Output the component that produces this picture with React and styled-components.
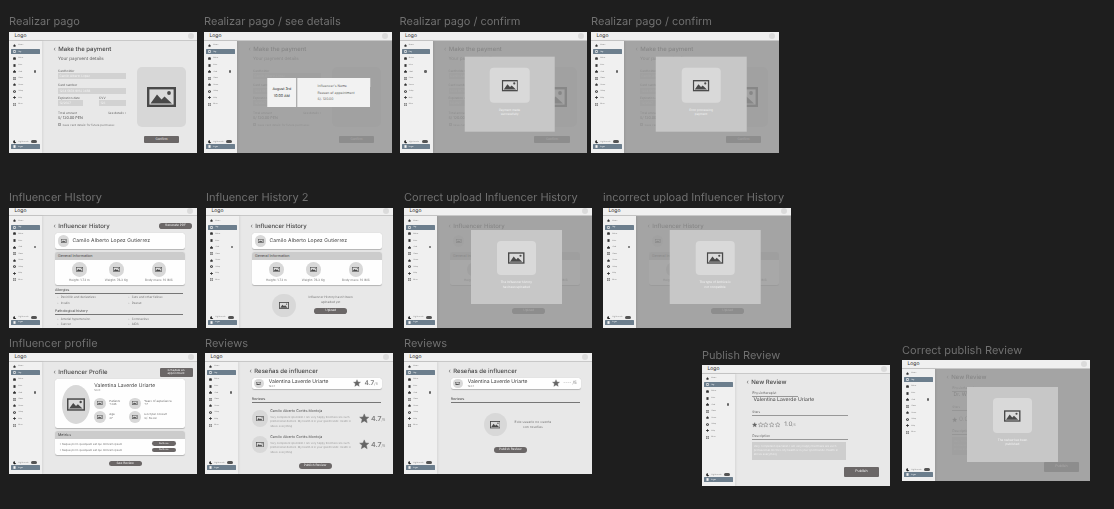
import React from "react";
import styled, { createGlobalStyle } from "styled-components";

const Global = createGlobalStyle`
  html, body { margin: 0; padding: 0; background: #1e1e1e; }
  body { font-family: "Inter", "Liberation Sans", sans-serif; overflow: hidden; text-rendering: geometricPrecision; }
  * { box-sizing: border-box; }
`;

const Canvas = styled.div`
  position: relative;
  width: 1114px;
  height: 509px;
  background: #1e1e1e;
  overflow: hidden;
`;
const Artboard = styled.section`
  position: absolute;
  left: ${(p) => p.$x}px;
  top: ${(p) => p.$y - (p.$lh || 16)}px;
  width: ${(p) => p.$w || 188}px;
  opacity: 0.999;
`;
const BoardLabel = styled.div`
  height: ${(p) => p.$lh || 16}px;
  font-size: 11px;
  line-height: 11px;
  color: #717171;
  white-space: nowrap;
`;
const Screen = styled.div`
  width: 100%;
  height: 120.5px;
  background: #e9e9e9;
  display: flex;
  flex-direction: column;
  overflow: hidden;
  color: #4a4a4a;
`;
const TopBar = styled.header`
  height: 8.5px;
  flex: none;
  background: #f1f1f1;
  border-bottom: 0.5px solid #c9c9c9;
  display: flex;
  align-items: center;
  justify-content: space-between;
  padding: 0 3.5px 0 5.5px;
  font-size: 5px;
  color: #333;
`;
const Avatar = styled.span`
  width: 6px;
  height: 6px;
  border-radius: 50%;
  background: #dcdcdc;
`;
const Body = styled.div`
  flex: 1;
  display: flex;
  min-height: 0;
`;
const Sidebar = styled.nav`
  width: 33px;
  flex: none;
  background: #f1f1f1;
  box-shadow: 1px 0 2px rgba(0, 0, 0, 0.08);
  display: flex;
  flex-direction: column;
  padding: 1.6px 2.5px 3px 2px;
  z-index: 2;
`;
const NavRow = styled.div`
  height: ${(p) => (p.$h ? p.$h : 6.55)}px;
  flex: none;
  display: flex;
  align-items: center;
  gap: 2px;
  padding: 0 2.2px;
  font-size: ${(p) => (p.$small ? 1.9 : 1.8)}px;
  white-space: nowrap;
  color: ${(p) => (p.$active ? "#fff" : "#777")};
`;
const NavInner = styled.div`
  flex: 1;
  height: 5px;
  display: flex;
  align-items: center;
  gap: 2px;
  margin: 0 -2.2px;
  padding: 0 2.2px;
  border-radius: 0.5px;
  background: ${(p) => (p.$active ? "#6d7f8e" : "transparent")};
`;
const Badge = styled.span`
  width: 2.4px;
  height: 2.4px;
  border-radius: 50%;
  background: #666;
  margin-left: auto;
  margin-right: 1px;
`;
const BottomArea = styled.div`
  margin-top: auto;
`;
const Toggle = styled.span`
  width: 6px;
  height: 3px;
  border-radius: 1.5px;
  background: #555;
  margin-left: auto;
`;
const Main = styled.main`
  flex: 1;
  min-width: 0;
  position: relative;
  overflow: hidden;
`;
const Page = styled.div`
  display: flex;
  flex-direction: column;
  padding: ${(p) => p.$top || 5}px 0 0 11.5px;
  height: 100%;
`;
const TitleRow = styled.div`
  display: flex;
  align-items: center;
  justify-content: space-between;
  height: 7px;
  flex: none;
  padding-right: 4.5px;
`;
const Title = styled.h1`
  margin: 0;
  font-size: ${(p) => p.$size || 6}px;
  font-weight: 500;
  color: #484848;
  white-space: nowrap;
  display: flex;
  align-items: center;
  gap: 2.5px;
  &::before {
    content: "‹";
    font-weight: 400;
    font-size: 6px;
    color: #666;
  }
`;
const DarkButton = styled.div`
  background: #6c6868;
  color: #f2f2f2;
  font-size: ${(p) => p.$size || 3.2}px;
  line-height: 3.4px;
  text-align: center;
  display: flex;
  align-items: center;
  justify-content: center;
  width: ${(p) => p.$w}px;
  height: ${(p) => p.$h}px;
  margin-top: ${(p) => p.$mt || 0}px;
  border-radius: ${(p) => (p.$pill ? p.$h / 2 : 1)}px;
  flex: none;
`;
const PayBody = styled.div`
  display: flex;
  gap: 11px;
  padding-left: 4.5px;
  margin-top: 4.8px;
`;
const PayForm = styled.div`
  width: 68px;
  display: flex;
  flex-direction: column;
`;
const SubTitle = styled.div`
  font-size: 4.6px;
  line-height: 6px;
  color: #666;
  margin-bottom: 5.7px;
`;
const Label = styled.div`
  font-size: 3.1px;
  line-height: 4px;
  color: #666;
  white-space: nowrap;
  margin-top: ${(p) => p.$mt || 0}px;
`;
const Input = styled.div`
  height: 6px;
  margin-top: 0.3px;
  background: #d3d3d3;
  color: #f5f5f5;
  font-size: 3px;
  line-height: 6px;
  padding-left: 1.5px;
  width: ${(p) => p.$w || "100%"};
  white-space: nowrap;
  overflow: hidden;
`;
const TwoFields = styled.div`
  display: grid;
  grid-template-columns: 25px 27px;
  justify-content: space-between;
  margin-top: 2.3px;
`;
const TotalRow = styled.div`
  display: flex;
  justify-content: space-between;
  margin-top: 5px;
  font-size: 3.1px;
  line-height: 4px;
  color: #666;
`;
const Amount = styled.div`
  font-size: 3.7px;
  line-height: 5px;
  color: #555;
  margin-top: 0.3px;
`;
const SaveRow = styled.div`
  display: flex;
  align-items: center;
  gap: 1.5px;
  font-size: 2.9px;
  line-height: 4px;
  color: #777;
  margin-top: 2.2px;
  white-space: nowrap;
`;
const CheckBox = styled.span`
  width: 3px;
  height: 3px;
  background: #d3d3d3;
  border: 0.3px solid #aaa;
  flex: none;
`;
const ImageCard = styled.div`
  width: 49px;
  height: 60px;
  margin-top: 9.7px;
  background: #d8d8d8;
  border-radius: 5px;
  flex: none;
  display: flex;
  align-items: center;
  justify-content: center;
`;
const PayFooter = styled.div`
  padding-left: 90.2px;
  margin-top: 9.3px;
`;
const Card = styled.div`
  background: #fff;
  border-radius: 2.5px;
  box-shadow: 0 0.5px 0.8px rgba(0, 0, 0, 0.22);
  overflow: hidden;
  width: ${(p) => p.$w || 130}px;
  margin-left: ${(p) => p.$ml ?? 1.5}px;
  margin-top: ${(p) => p.$mt || 0}px;
  flex: none;
  visibility: ${(p) => (p.$hidden ? "hidden" : "visible")};
`;
const PersonRow = styled.div`
  height: ${(p) => p.$h || 16.6}px;
  display: flex;
  align-items: center;
  gap: ${(p) => p.$gap || 3.3}px;
  padding: 0 ${(p) => p.$pr || 3}px 0 ${(p) => p.$pl || 3}px;
`;
const Circle = styled.div`
  width: ${(p) => p.$d}px;
  height: ${(p) => p.$d}px;
  border-radius: 50%;
  background: #d9d9d9;
  flex: none;
  display: flex;
  align-items: center;
  justify-content: center;
  visibility: ${(p) => (p.$hidden ? "hidden" : "visible")};
`;
const PersonName = styled.div`
  font-size: ${(p) => p.$size || 5}px;
  line-height: 6px;
  letter-spacing: ${(p) => p.$ls || 0}px;
  color: #3e3e3e;
  white-space: nowrap;
`;
const CardHeader = styled.div`
  height: 8px;
  background: #cdcdcd;
  font-size: 3.7px;
  line-height: 8px;
  color: #444;
  padding-left: 3px;
`;
const StatsRow = styled.div`
  display: grid;
  grid-template-columns: 48.6px 25.4px 60px;
  height: 24.7px;
  justify-items: center;
  padding-top: 2px;
`;
const Stat = styled.div`
  display: flex;
  flex-direction: column;
  align-items: center;
  gap: 1.4px;
  font-size: 3.1px;
  line-height: 4px;
  color: #777;
  white-space: nowrap;
`;
const SectionTitle = styled.div`
  font-size: 3.5px;
  line-height: 4px;
  color: #444;
  margin-left: ${(p) => p.$ml ?? 1.5}px;
  width: ${(p) => p.$w || 128}px;
  margin-top: ${(p) => p.$mt || 0}px;
  padding-bottom: 1px;
  border-bottom: 0.7px solid #777;
  flex: none;
`;
const Bullets = styled.ul`
  list-style: none;
  margin: 2.3px 0 0 3.5px;
  padding: 0;
  display: grid;
  grid-template-columns: 71px 1fr;
  row-gap: 1.8px;
  font-size: 3px;
  line-height: 3.9px;
  color: #777;
  flex: none;
  li::before {
    content: "•";
    margin-right: 2px;
    color: #aaa;
  }
`;
const EmptyHistory = styled.div`
  display: flex;
  gap: 5.2px;
  margin: 9.3px 0 0 21.5px;
`;
const EmptyText = styled.div`
  width: 60px;
  display: flex;
  flex-direction: column;
  align-items: center;
  padding-top: 1.4px;
  font-size: 3.1px;
  line-height: 4.6px;
  color: #777;
  text-align: center;
`;
const ProfileCard = styled.div`
  height: 49.3px;
  display: flex;
  align-items: flex-start;
  padding: 4.5px 0 0 6.6px;
  gap: 4px;
`;
const BigEllipse = styled.div`
  width: 28.7px;
  height: 38.7px;
  margin-top: 2.2px;
  border-radius: 50%;
  background: #d9d9d9;
  display: flex;
  align-items: center;
  justify-content: center;
  flex: none;
`;
const ProfileInfo = styled.div`
  display: flex;
  flex-direction: column;
`;
const SmallId = styled.div`
  font-size: 2.7px;
  line-height: 3.4px;
  color: #777;
`;
const InfoGrid = styled.div`
  display: grid;
  grid-template-columns: 35px 1fr;
  row-gap: 2.1px;
  margin-top: 5px;
`;
const InfoItem = styled.div`
  display: flex;
  align-items: center;
  gap: 3.5px;
  font-size: 2.9px;
  line-height: 3.7px;
  color: #666;
  white-space: nowrap;
`;
const MetricRow = styled.div`
  display: flex;
  align-items: center;
  justify-content: space-between;
  height: 6.3px;
  padding: 0 9px 0 4.5px;
  font-size: 2.8px;
  color: #777;
  white-space: nowrap;
`;
const MetricList = styled.div`
  padding-top: 1.8px;
  height: 16.7px;
`;
const Centered = styled.div`
  display: flex;
  justify-content: center;
  margin-top: ${(p) => p.$mt || 0}px;
  padding-right: ${(p) => p.$pr || 0}px;
`;
const Rating = styled.div`
  display: flex;
  align-items: center;
  gap: ${(p) => p.$gap || 3}px;
  margin-left: auto;
  font-size: ${(p) => p.$size || 6.5}px;
  font-weight: 600;
  color: #808080;
  white-space: nowrap;
`;
const Denominator = styled.small`
  font-size: 0.55em;
  font-weight: 400;
`;
const NoScore = styled.span`
  font-size: 4.4px;
  font-weight: 400;
`;
const PersonText = styled.div`
  display: flex;
  flex-direction: column;
`;
const ReviewRow = styled.div`
  display: flex;
  align-items: center;
  gap: 2px;
  height: 16.5px;
  margin-top: ${(p) => p.$mt || 0}px;
  width: 133.6px;
  margin-left: 2.2px;
  flex: none;
`;
const ReviewText = styled.div`
  width: 85.5px;
`;
const ReviewName = styled.div`
  font-size: 3.6px;
  line-height: 5px;
  color: #555;
  white-space: nowrap;
`;
const ReviewBody = styled.div`
  font-size: 2.7px;
  line-height: 4.3px;
  color: #999;
  margin-top: 1px;
`;
const EmptyReviews = styled.div`
  display: flex;
  align-items: center;
  justify-content: center;
  gap: 8px;
  margin-top: 10.5px;
  font-size: 3.4px;
  line-height: 4.6px;
  color: #777;
  text-align: center;
  padding-right: 5.2px;
`;
const FormBlock = styled.div`
  margin-left: 5.8px;
  display: flex;
  flex-direction: column;
`;
const FormLabel = styled.div`
  font-size: 3.3px;
  line-height: 4px;
  color: #666;
  width: ${(p) => p.$w}px;
  border-bottom: 0.7px solid #999;
  padding-bottom: 1.2px;
  margin-top: ${(p) => p.$mt || 0}px;
`;
const FormValue = styled.div`
  font-size: 5.1px;
  line-height: 6px;
  color: #444;
  margin: 0.5px 0 0 1.3px;
  white-space: nowrap;
`;
const StarsRow = styled.div`
  display: flex;
  align-items: center;
  gap: 0.2px;
  height: 8px;
  margin-top: 5px;
  font-size: 6.2px;
  color: #777;
`;
const StarValue = styled.span`
  margin-left: ${(p) => p.$ml}px;
  color: #909090;
  font-weight: 500;
`;
const TextArea = styled.div`
  width: 93.3px;
  height: 17.7px;
  margin-top: 2.6px;
  background: #cfcfcf;
  color: #eee;
  font-size: 2.8px;
  line-height: 4.1px;
  padding: 1.5px 1.5px;
`;
const FormFooter = styled.div`
  margin-top: 6.7px;
  padding-left: 91.4px;
`;
const Overlay = styled.div`
  position: absolute;
  inset: 0;
  background: rgba(150, 150, 150, 0.82);
  display: flex;
  align-items: center;
  justify-content: center;
  z-index: 1;
`;
const DetailDialog = styled.div`
  width: 103px;
  height: 29px;
  background: #f3f3f3;
  display: flex;
  align-items: stretch;
  transform: translate(4.25px, -4px);
  font-size: 3.6px;
  color: #444;
`;
const DetailDate = styled.div`
  width: 30.5px;
  border-right: 0.5px solid #999;
  display: flex;
  flex-direction: column;
  align-items: center;
  justify-content: center;
  gap: 2.7px;
  color: #222;
`;
const DetailInfo = styled.div`
  padding-left: 20px;
  display: flex;
  flex-direction: column;
  justify-content: center;
  gap: 2.9px;
  font-size: 3.4px;
  color: #666;
  white-space: nowrap;
`;
const Modal = styled.div`
  width: 90.5px;
  height: 74.5px;
  background: #c8c8c8;
  display: flex;
  flex-direction: column;
  align-items: center;
  padding-top: 11px;
  transform: translate(${(p) => p.$dx || 0}px, ${(p) => p.$dy || 0}px);
`;
const ModalIcon = styled.div`
  width: 39.5px;
  height: 34.5px;
  border-radius: 4px;
  background: #dadada;
  display: flex;
  align-items: center;
  justify-content: center;
  flex: none;
`;
const ModalText = styled.div`
  width: 36px;
  margin-top: 5px;
  font-size: 3px;
  line-height: 4.6px;
  color: #f5f5f5;
  text-align: center;
`;

const ImageIcon = ({ w = 8, h = 5.5 }) => (
  <svg width={w} height={h} viewBox="0 0 29 20" aria-hidden="true">
    <rect x="1.2" y="1.2" width="26.6" height="17.6" fill="#dcdcdc" stroke="#4a4a4a" strokeWidth="2.4" />
    <path d="M3.5 16.5 L10 7.5 L14.5 12.5 L17.5 9.5 L25 16.5 Z" fill="#4a4a4a" />
    <circle cx="22" cy="6" r="1.9" fill="#4a4a4a" />
  </svg>
);

const navGlyphs = [
  <path d="M5 0.5 L9.5 5 H8.5 V9.5 H1.5 V5 H0.5 Z" />,
  <path d="M1 1 H9 V9 H1 Z M3 3 V7 H7 V3 Z" fillRule="evenodd" />,
  <path d="M2 1 H8 L9.5 3 V9 H0.5 V3 Z" />,
  <path d="M1.5 0.5 H8.5 V9.5 H1.5 Z" />,
  <path d="M3 3 V1 H7 V3 H9.5 V9.5 H0.5 V3 Z" />,
  <path d="M1 1 H4.4 V4.4 H1 Z M5.6 1 H9 V4.4 H5.6 Z M1 5.6 H4.4 V9 H1 Z M5.6 5.6 H9 V9 H5.6 Z" />,
  <path d="M5 0.5 L9 4 V9.5 H1 V4 Z" />,
  <path d="M5 0.5 A4.5 4.5 0 1 1 4.99 0.5 Z M5 3.5 A1.5 1.5 0 1 0 5.01 3.5 Z" fillRule="evenodd" />,
  <path d="M3.5 0.5 H6.5 V3.5 H9.5 V6.5 H6.5 V9.5 H3.5 V6.5 H0.5 V3.5 H3.5 Z" />,
  <path d="M1 1 H4 V4 H1 Z M6 1 H9 V4 H6 Z M1 6 H4 V9 H1 Z M6 6 H9 V9 H6 Z" />,
];
const NavIcon = ({ i, light }) => (
  <svg width="3" height="3" viewBox="0 0 10 10" fill={light ? "#f4f4f4" : "#333"} style={{ flex: "none" }} aria-hidden="true">
    {navGlyphs[i]}
  </svg>
);
const Moon = () => (
  <svg width="3.4" height="3.4" viewBox="0 0 10 10" fill="#222" style={{ flex: "none" }} aria-hidden="true">
    <path d="M6 0.5 A4.7 4.7 0 1 0 9.6 7 A4.2 4.2 0 0 1 6 0.5 Z" />
  </svg>
);
const Star = ({ d = 8, outline }) => (
  <svg width={d} height={d} viewBox="0 0 24 24" fill={outline ? "none" : "#666"} stroke={outline ? "#777" : "#666"} strokeWidth={outline ? 2 : 1} style={{ flex: "none" }} aria-hidden="true">
    <path d="M12 2 L15 9 L22.5 9.6 L16.8 14.5 L18.6 22 L12 18 L5.4 22 L7.2 14.5 L1.5 9.6 L9 9 Z" />
  </svg>
);

const navNames = ["Home", "Pay", "Notes", "Files", "Chat", "Plans", "Users", "Setup", "Help", "More"];

const SideNav = () => (
  <Sidebar>
    {navNames.map((n, i) => (
      <NavRow key={n} $active={i === 1}>
        <NavInner $active={i === 1}>
          <NavIcon i={i} light={i === 1} />
          {n}
          {i === 4 && <Badge />}
        </NavInner>
      </NavRow>
    ))}
    <BottomArea>
      <NavRow $h={4.6} $small>
        <Moon />
        Light mode
        <Toggle />
      </NavRow>
      <NavRow $active $h={5.4}>
        <NavInner $active>
          <NavIcon i={3} light />
          Login
        </NavInner>
      </NavRow>
    </BottomArea>
  </Sidebar>
);

const PaymentPage = () => (
  <Page>
    <TitleRow>
      <Title>Make the payment</Title>
    </TitleRow>
    <PayBody>
      <PayForm>
        <SubTitle>Your payment details</SubTitle>
        <Label>Cardholder</Label>
        <Input>Camilo Alberto Lopez</Input>
        <Label $mt={4}>Card number</Label>
        <Input>1234 5678 9012 3456</Input>
        <TwoFields>
          <div>
            <Label>Expiration date</Label>
            <Input>12/2027</Input>
          </div>
          <div>
            <Label>CVV</Label>
            <Input>123</Input>
          </div>
        </TwoFields>
        <TotalRow>
          <span>Total amount</span>
          <span>See details ›</span>
        </TotalRow>
        <Amount>S/ 120.00 PEN</Amount>
        <SaveRow>
          <CheckBox />
          Save card details for future purchases
        </SaveRow>
      </PayForm>
      <ImageCard>
        <ImageIcon w={29} h={20} />
      </ImageCard>
    </PayBody>
    <PayFooter>
      <DarkButton $w={35.5} $h={6.4}>Confirm</DarkButton>
    </PayFooter>
  </Page>
);

const PersonCard = ({ hidden }) => (
  <Card $mt={3.2} $hidden={hidden}>
    <PersonRow>
      <Circle $d={11.3}>
        <ImageIcon w={6} h={4} />
      </Circle>
      <PersonName $ls={0.12}>Camilo Alberto Lopez Gutierrez</PersonName>
    </PersonRow>
  </Card>
);

const GeneralInfo = () => (
  <Card $mt={2.7}>
    <CardHeader>General Information</CardHeader>
    <StatsRow>
      <Stat>
        <Circle $d={14.7}><ImageIcon w={7} h={5} /></Circle>
        Height: 1.73 m
      </Stat>
      <Stat>
        <Circle $d={14.7}><ImageIcon w={7} h={5} /></Circle>
        Weight: 76.3 Kg
      </Stat>
      <Stat>
        <Circle $d={14.7}><ImageIcon w={7} h={5} /></Circle>
        Body mass: 10 IMC
      </Stat>
    </StatsRow>
  </Card>
);

const HistoryPage = () => (
  <Page $top={6.5}>
    <TitleRow>
      <Title>Influencer History</Title>
      <DarkButton $w={33} $h={5.6} $pill>Generate PDF</DarkButton>
    </TitleRow>
    <PersonCard />
    <GeneralInfo />
    <SectionTitle $mt={3.3}>Allergies</SectionTitle>
    <Bullets>
      <li>Penicillin and derivatives</li>
      <li>Cats and other felines</li>
      <li>Insulin</li>
      <li>Peanut</li>
    </Bullets>
    <SectionTitle $mt={3.6}>Pathological history</SectionTitle>
    <Bullets>
      <li>Arterial hypertension</li>
      <li>Coronavirus</li>
      <li>Cancer</li>
      <li>AIDS</li>
    </Bullets>
  </Page>
);

const HistoryTwoPage = ({ dimmed }) => (
  <Page $top={6.5}>
    <TitleRow>
      <Title>Influencer History</Title>
    </TitleRow>
    <PersonCard hidden={dimmed} />
    <GeneralInfo />
    <EmptyHistory>
      <Circle $d={23.5} $hidden={dimmed}><ImageIcon w={10} h={7} /></Circle>
      <EmptyText>
        <span>Influencer History hasn't been<br />uploaded yet</span>
        <DarkButton $w={33} $h={5.6} $pill $mt={3.7}>Upload</DarkButton>
      </EmptyText>
    </EmptyHistory>
  </Page>
);

const ProfilePage = () => (
  <Page $top={7}>
    <TitleRow>
      <Title>Influencer Profile</Title>
      <DarkButton $w={33} $h={9} $size={2.9}>Schedule an appointment</DarkButton>
    </TitleRow>
    <Card $mt={3.2}>
      <ProfileCard>
        <BigEllipse><ImageIcon w={18} h={13} /></BigEllipse>
        <ProfileInfo>
          <PersonName $size={5} $ls={0.05}>Valentina Laverde Uriarte</PersonName>
          <SmallId>1234</SmallId>
          <InfoGrid>
            <InfoItem>
              <Circle $d={11.5}><ImageIcon w={6} h={4} /></Circle>
              <div>Patients<br />+345</div>
            </InfoItem>
            <InfoItem>
              <Circle $d={11.5}><ImageIcon w={6} h={4} /></Circle>
              <div>Years of experience<br />+7</div>
            </InfoItem>
            <InfoItem>
              <Circle $d={11.5}><ImageIcon w={6} h={4} /></Circle>
              <div>Age<br />37</div>
            </InfoItem>
            <InfoItem>
              <Circle $d={11.5}><ImageIcon w={6} h={4} /></Circle>
              <div>Cost per consult<br />S/. 50.00</div>
            </InfoItem>
          </InfoGrid>
        </ProfileInfo>
      </ProfileCard>
    </Card>
    <Card $mt={2.7}>
      <CardHeader>Metrics</CardHeader>
      <MetricList>
        <MetricRow>
          • Neque porro quisquam est qui dolorem ipsum
          <DarkButton $w={24.5} $h={4.8} $pill $size={2.5}>Remove</DarkButton>
        </MetricRow>
        <MetricRow>
          • Neque porro quisquam est qui dolorem ipsum
          <DarkButton $w={24.5} $h={4.8} $pill $size={2.5}>Remove</DarkButton>
        </MetricRow>
      </MetricList>
    </Card>
    <Centered $mt={5.3}>
      <DarkButton $w={33} $h={5.6} $pill>See Review</DarkButton>
    </Centered>
  </Page>
);

const ReviewItem = ({ mt }) => (
  <ReviewRow $mt={mt}>
    <Circle $d={16.5}><ImageIcon w={8} h={5.5} /></Circle>
    <ReviewText>
      <ReviewName>Camilo Alberto Cortés Montoja</ReviewName>
      <ReviewBody>
        Very competent specialist. I am very happy that there are such professional doctors. My health is in your good hands. Health is above everything
      </ReviewBody>
    </ReviewText>
    <Rating $size={7} $gap={2}>
      <Star d={10.5} />
      <span>4.7<Denominator>/5</Denominator></span>
    </Rating>
  </ReviewRow>
);

const ReviewerCard = ({ score }) => (
  <Card $mt={2.9} $w={130.5} $ml={2.2}>
    <PersonRow $h={11.3} $pl={2.5} $pr={4.4} $gap={5}>
      <Circle $d={9.6}><ImageIcon w={5} h={3.6} /></Circle>
      <PersonText>
        <PersonName $size={5}>Valentina Laverde Uriarte</PersonName>
        <SmallId>1234</SmallId>
      </PersonText>
      <Rating $gap={3.7}>
        <Star d={8} />
        {score}
      </Rating>
    </PersonRow>
  </Card>
);

const ReviewsPage = () => (
  <Page $top={6.3}>
    <TitleRow>
      <Title>Reseñas de influencer</Title>
    </TitleRow>
    <ReviewerCard score={<span>4.7<Denominator>/5</Denominator></span>} />
    <SectionTitle $ml={2.2} $w={129} $mt={8}>Reviews</SectionTitle>
    <ReviewItem mt={7.3} />
    <ReviewItem mt={9.5} />
    <Centered $mt={10} $pr={12}>
      <DarkButton $w={33} $h={5.8} $pill>Publish Review</DarkButton>
    </Centered>
  </Page>
);

const ReviewsEmptyPage = () => (
  <Page $top={6.3}>
    <TitleRow>
      <Title>Reseñas de influencer</Title>
    </TitleRow>
    <ReviewerCard score={<NoScore>---- /5</NoScore>} />
    <SectionTitle $ml={2.2} $w={129} $mt={8}>Reviews</SectionTitle>
    <EmptyReviews>
      <Circle $d={23}><ImageIcon w={10.5} h={7.5} /></Circle>
      <div>Este usuario no cuenta<br />con reseñas</div>
    </EmptyReviews>
    <Centered $mt={10.5} $pr={19.4}>
      <DarkButton $w={33} $h={5.8} $pill>Publish Review</DarkButton>
    </Centered>
  </Page>
);

const PublishPage = ({ who, score, stars, gap }) => (
  <Page $top={5.7}>
    <TitleRow>
      <Title>New Review</Title>
    </TitleRow>
    <FormBlock>
      <FormLabel $w={46} $mt={4.5}>Physiotherapist</FormLabel>
      <FormValue>{who}</FormValue>
      <FormLabel $w={95.5} $mt={6.3}>Stars</FormLabel>
      <StarsRow>
        {stars}
        <StarValue $ml={gap}>{score}<Denominator>/5</Denominator></StarValue>
      </StarsRow>
      <FormLabel $w={95.5} $mt={4.7}>Description</FormLabel>
      <TextArea>
        Very competent specialist. I am very happy that there are such professional doctors. My health is in your good hands. Health is above everything
      </TextArea>
      <FormFooter>
        <DarkButton $w={35.5} $h={10} $size={3.6}>Publish</DarkButton>
      </FormFooter>
    </FormBlock>
  </Page>
);

const OneStar = (
  <>
    <Star d={5.4} />
    <Star d={5.4} outline />
    <Star d={5.4} outline />
    <Star d={5.4} outline />
    <Star d={5.4} outline />
  </>
);
const NoStar = <Star d={5.4} />;

const SuccessModal = ({ text, dx, dy }) => (
  <Modal $dx={dx} $dy={dy}>
    <ModalIcon>
      <ImageIcon w={16.5} h={12} />
    </ModalIcon>
    <ModalText>{text}</ModalText>
  </Modal>
);

const payDetails = (
  <DetailDialog>
    <DetailDate>
      <span>August 3rd</span>
      <span>10:00 AM</span>
    </DetailDate>
    <DetailInfo>
      <span>Influencer's Name</span>
      <span>Reason of appointment</span>
      <span>S/. 120.00</span>
    </DetailInfo>
  </DetailDialog>
);

const boards = [
  { x: 9, y: 32, label: "Realizar pago", page: <PaymentPage /> },
  { x: 204, y: 32, w: 187.5, label: "Realizar pago / see details", page: <PaymentPage />, over: payDetails },
  { x: 399.5, y: 32, w: 187.5, label: "Realizar pago / confirm", page: <PaymentPage />, over: <SuccessModal text="Payment made successfully" dx={-0.25} dy={-2.3} /> },
  { x: 591, y: 32, w: 187.5, label: "Realizar pago / confirm", page: <PaymentPage />, over: <SuccessModal text="Error processing payment" dx={-0.25} dy={-2.3} /> },
  { x: 9, y: 207.5, w: 187.5, label: "Influencer HIstory", page: <HistoryPage /> },
  { x: 206, y: 207.5, w: 186.5, label: "Influencer History 2", page: <HistoryTwoPage /> },
  { x: 404, y: 207.5, w: 187.5, label: "Correct upload Influencer History", page: <HistoryTwoPage dimmed />, over: <SuccessModal text="The Influencer history has been uploaded" dx={2} dy={-5} /> },
  { x: 603, y: 207.5, w: 187.5, label: "incorrect upload Influencer History", page: <HistoryTwoPage dimmed />, over: <SuccessModal text="The type of Archive is not compatible" dx={1.75} dy={-5} /> },
  { x: 9, y: 353, w: 188, lh: 15, label: "Influencer profile", page: <ProfilePage /> },
  { x: 205, y: 353, w: 187.5, lh: 15, label: "Reviews", page: <ReviewsPage /> },
  { x: 404, y: 353, w: 187.5, lh: 15, label: "Reviews", page: <ReviewsEmptyPage /> },
  { x: 702, y: 365, w: 188, lh: 15, label: "Publish Review", page: <PublishPage who="Valentina Laverde Uriarte" score="1.0" stars={OneStar} gap={4} /> },
  { x: 902, y: 360, w: 188, lh: 15, label: "Correct publish Review", page: <PublishPage who="Dr. Williams" score="0.0" stars={NoStar} gap={1} />, over: <SuccessModal text="The review has been published" /> },
];

export default function App() {
  return (
    <Canvas>
      <Global />
      {boards.map((b, i) => (
        <Artboard key={i} $x={b.x} $y={b.y} $w={b.w} $lh={b.lh}>
          <BoardLabel $lh={b.lh}>{b.label}</BoardLabel>
          <Screen>
            <TopBar>
              Logo
              <Avatar />
            </TopBar>
            <Body>
              <SideNav />
              <Main>
                {b.page}
                {b.over && <Overlay>{b.over}</Overlay>}
              </Main>
            </Body>
          </Screen>
        </Artboard>
      ))}
    </Canvas>
  );
}
